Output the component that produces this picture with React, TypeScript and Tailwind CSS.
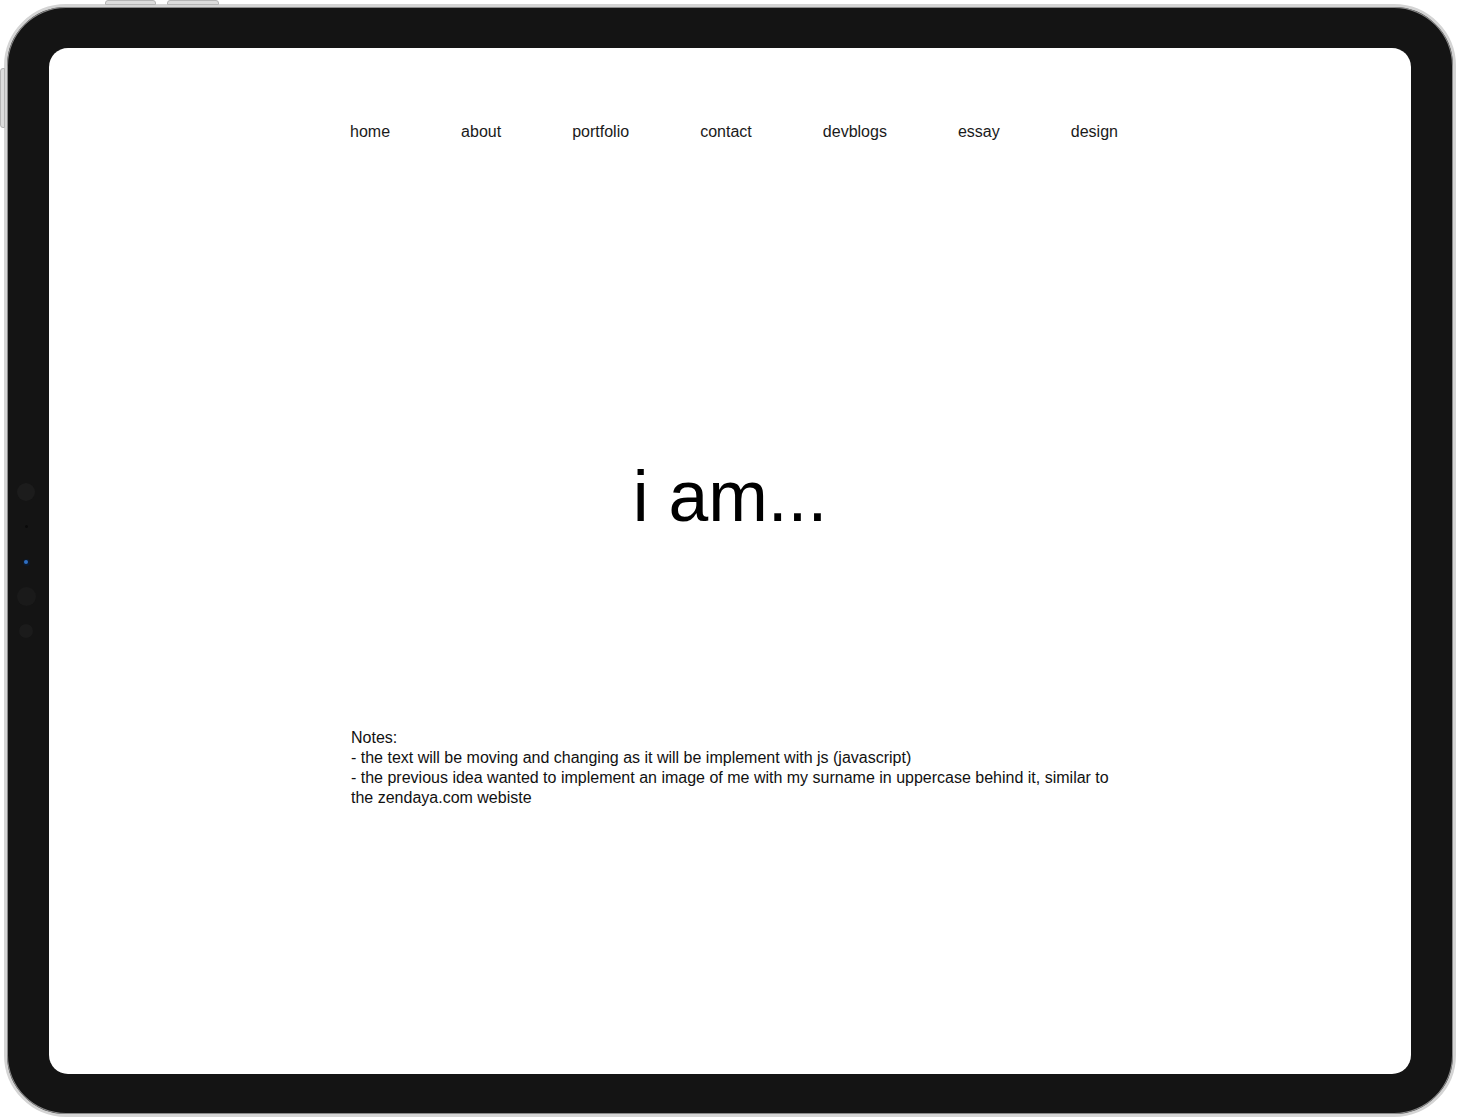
import React from "react";

const navItems = ["home", "about", "portfolio", "contact", "devblogs", "essay", "design"];

export default function App() {
  return (
    <div
      className="relative w-[1458px] h-[1119px] bg-white overflow-hidden"
      style={{ fontFamily: '"Liberation Sans", Arial, sans-serif' }}
    >
      {/* hardware buttons on the device edge */}
      <div className="absolute left-[105px] top-0 w-[51px] h-[5px] rounded-t-[3px] bg-[#dcdcdc] border border-[#b5b5b5]" />
      <div className="absolute left-[167px] top-0 w-[52px] h-[5px] rounded-t-[3px] bg-[#dcdcdc] border border-[#b5b5b5]" />
      <div className="absolute left-0 top-[68px] w-[5px] h-[60px] rounded-l-[3px] bg-[#dcdcdc] border border-[#b5b5b5]" />

      <div className="pt-[4px] pl-[4px]">
        <div className="flex w-[1452px] h-[1113px] rounded-[62px] border-[3px] border-[#d4d4d4] bg-[#141414] pr-[42px] pt-[41px] pb-[40px] shadow-[inset_0_0_0_1px_#8a8a8a]">
          {/* left bezel with camera sensors */}
          <div className="w-[42px] shrink-0 flex flex-col items-center justify-center pr-[4px] pb-[2px]">
            <div className="w-[18px] h-[18px] rounded-full bg-[#1c1c1c]" />
            <div className="mt-[24px] w-[3px] h-[3px] rounded-full bg-[#0a0a0a]" />
            <div className="mt-[31px] w-[7px] h-[7px] rounded-full bg-[#0d1a2c] flex items-center justify-center">
              <div className="w-[4px] h-[4px] rounded-full bg-[#2f6fc4]" />
            </div>
            <div className="mt-[21px] w-[19px] h-[19px] rounded-full bg-[#1a1a1a]" />
            <div className="mt-[18px] w-[14px] h-[14px] rounded-full bg-[#1b1b1b]" />
          </div>

          {/* screen */}
          <div className="flex-1 h-full rounded-[19px] bg-white overflow-hidden">
            <div className="ml-[301px] w-[768px] pt-[74px]">
              <nav className="flex justify-between text-[16px] leading-[20px] text-[#1a1a1a]">
                {navItems.map((n) => (
                  <span key={n}>{n}</span>
                ))}
              </nav>
            </div>
            <div className="flex justify-center pt-[312px]">
              <h1 className="text-[71.5px] leading-[84px] text-black font-normal">i am...</h1>
            </div>
            <div className="ml-[302px] w-[757px] pt-[190px] text-[16px] leading-[20px] text-[#111]">
              <div>Notes:</div>
              <div>- the text will be moving and changing as it will be implement with js (javascript)</div>
              <div className="text-justify [text-align-last:justify] whitespace-nowrap">
                - the previous idea wanted to implement an image of me with my surname in uppercase behind it, similar to
              </div>
              <div>the zendaya.com webiste</div>
            </div>
          </div>
        </div>
      </div>
    </div>
  );
}
